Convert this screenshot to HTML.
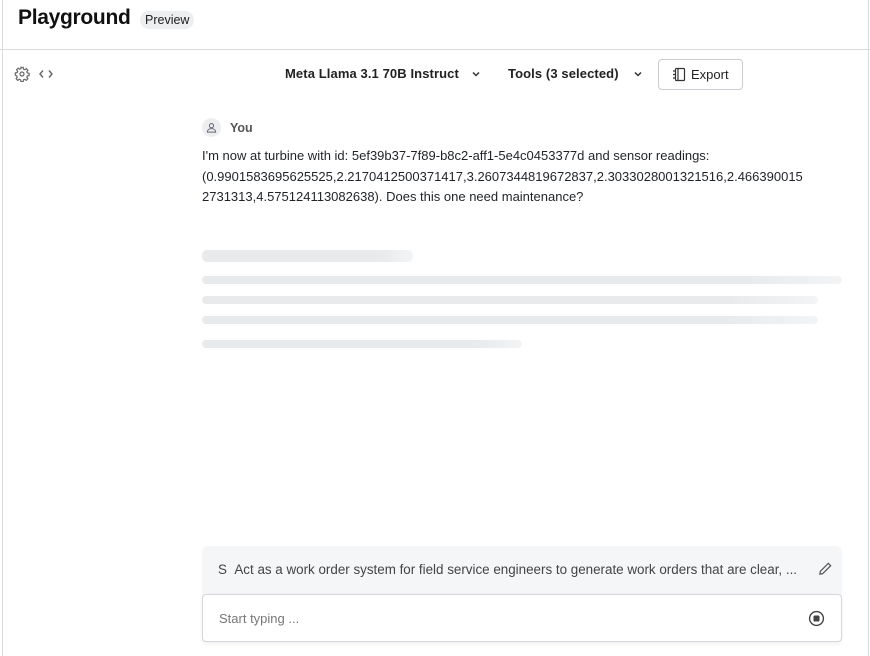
<!DOCTYPE html>
<html><head><meta charset="utf-8"><style>
*{box-sizing:border-box;margin:0;padding:0}
body{width:870px;height:656px;overflow:hidden;background:#fff;font-family:"Liberation Sans",sans-serif;color:#1f2328;position:relative}
.frame{position:absolute;left:2px;top:0;width:867px;height:656px;border-left:1px solid #d8dadd;border-right:1px solid #d8dadd}
.hdr{position:absolute;left:0;top:0;width:870px;height:50px;border-bottom:1px solid #d8dadd}
h1{position:absolute;left:18px;top:6px;font-size:21px;font-weight:bold;letter-spacing:-0.3px;color:#111}
.badge{position:absolute;left:140px;top:11px;background:#eceef0;border-radius:9px;padding:2px 5px;font-size:12.5px;color:#222}
.tb{position:absolute;top:66px;font-size:13px;font-weight:bold;color:#222;letter-spacing:0.1px}
.btn{position:absolute;left:658px;top:59px;width:85px;height:31px;border:1px solid #c9ccd0;border-radius:4px;font-size:13px;color:#222}
.you{position:absolute;left:202px;top:118px;display:flex;align-items:center;font-size:12.5px;font-weight:bold;color:#555}
.av{width:19px;height:19px;border-radius:50%;background:#eceef0;margin-right:9px;display:flex;align-items:center;justify-content:center}
.msg{position:absolute;left:202px;top:146px;width:650px;font-size:13px;line-height:20.5px;color:#1f2328}
.bar{position:absolute;left:202px;border-radius:5px;background:linear-gradient(90deg,#e8eaec 85%,#f3f4f5)}
.sys{position:absolute;left:202px;top:546px;width:640px;height:60px;background:#f5f6f7;border-radius:6px}
.sys span{position:absolute;left:16px;top:16px;font-size:13.4px;color:#444;white-space:nowrap}
.inp{position:absolute;left:202px;top:594px;width:640px;height:48px;background:#fff;border:1px solid #d3d6da;border-radius:4px;box-shadow:0 2px 4px rgba(0,0,0,.06)}
.inp span{position:absolute;left:16px;top:16px;font-size:13px;color:#777}
</style></head><body>
<div class="frame"></div>
<div class="hdr"><h1>Playground</h1><div class="badge">Preview</div></div>
<svg style="position:absolute;left:14px;top:66px" width="16" height="16" viewBox="0 0 24 24" fill="none" stroke="#666" stroke-width="1.8"><circle cx="12" cy="12" r="3"/><path d="M10.3 2h3.4l.5 2.7 1.9.8 2.3-1.6 2.4 2.4-1.6 2.3.8 1.9 2.7.5v3.4l-2.7.5-.8 1.9 1.6 2.3-2.4 2.4-2.3-1.6-1.9.8-.5 2.7h-3.4l-.5-2.7-1.9-.8-2.3 1.6-2.4-2.4 1.6-2.3-.8-1.9L2 13.7v-3.4l2.7-.5.8-1.9-1.6-2.3 2.4-2.4 2.3 1.6 1.9-.8z"/></svg>
<svg style="position:absolute;left:38px;top:68px" width="16" height="12" viewBox="0 0 16 12" fill="none" stroke="#666" stroke-width="1.4"><path d="M5 2.5 2 6l3 3.5M11 2.5 14 6l-3 3.5"/></svg>
<div class="tb" style="left:285px">Meta Llama 3.1 70B Instruct</div>
<svg style="position:absolute;left:471px;top:70px" width="10" height="8" viewBox="0 0 10 8" fill="none" stroke="#333" stroke-width="1.5"><path d="M2 2.5 5 5.5 8 2.5"/></svg>
<div class="tb" style="left:508px">Tools (3 selected)</div>
<svg style="position:absolute;left:633px;top:70px" width="10" height="8" viewBox="0 0 10 8" fill="none" stroke="#333" stroke-width="1.5"><path d="M2 2.5 5 5.5 8 2.5"/></svg>
<div class="btn"><svg style="position:absolute;left:13px;top:7px" width="14" height="15" viewBox="0 0 14 15" fill="none" stroke="#333" stroke-width="1.2"><rect x="3.5" y="1.5" width="9" height="12" rx="1"/><path d="M6 1.5v12M1 4h3M1 7.5h3M1 11h3"/></svg><span style="position:absolute;left:32px;top:7px">Export</span></div>
<div class="you"><div class="av"><svg width="11" height="11" viewBox="0 0 12 12" fill="none" stroke="#667" stroke-width="1.1"><circle cx="6" cy="4" r="2.3"/><path d="M1.5 11c0-2.5 2-3.8 4.5-3.8s4.5 1.3 4.5 3.8z"/></svg></div>You</div>
<div class="msg">I'm now at turbine with id: 5ef39b37-7f89-b8c2-aff1-5e4c0453377d and sensor readings: (0.9901583695625525,2.2170412500371417,3.2607344819672837,2.3033028001321516,2.466390015 2731313,4.575124113082638). Does this one need maintenance?</div>
<div class="bar" style="top:250px;width:211px;height:12px"></div>
<div class="bar" style="top:276px;width:640px;height:8px"></div>
<div class="bar" style="top:296px;width:616px;height:8px"></div>
<div class="bar" style="top:316px;width:616px;height:8px"></div>
<div class="bar" style="top:340px;width:320px;height:8px"></div>
<div class="sys"><span>S&nbsp;&nbsp;Act as a work order system for field service engineers to generate work orders that are clear, ...</span>
<svg style="position:absolute;left:616px;top:15px" width="15" height="15" viewBox="0 0 16 16" fill="none" stroke="#555" stroke-width="1.3"><path d="M11 2.5l2.5 2.5L5 13.5 2 14l.5-3z"/></svg></div>
<div class="inp"><span>Start typing ...</span>
<svg style="position:absolute;left:605px;top:15px" width="17" height="17" viewBox="0 0 16 16" fill="none" stroke="#444" stroke-width="1.3"><circle cx="8" cy="8" r="6.5"/><rect x="5.8" y="5.8" width="4.4" height="4.4" fill="#444" rx=".6"/></svg></div>
</body></html>
